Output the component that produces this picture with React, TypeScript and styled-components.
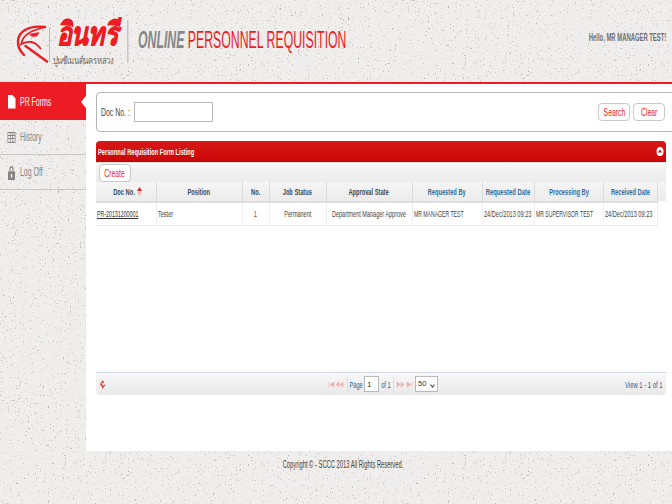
import React from 'react';
import styled, { createGlobalStyle } from 'styled-components';

const noise = `data:image/svg+xml,${encodeURIComponent(
    `<svg xmlns='http://www.w3.org/2000/svg' width='400' height='400'><filter id='n' x='0' y='0' width='100%' height='100%'><feTurbulence type='fractalNoise' baseFrequency='0.6' numOctaves='3' seed='7'/><feColorMatrix values='0 0 0 0 0.45 0 0 0 0 0.44 0 0 0 0 0.42 3.5 3.5 0 0 -4.22'/></filter><rect width='400' height='400' fill='#efeeec'/><rect width='400' height='400' filter='url(#n)'/></svg>`,
)}`;

const GlobalStyle = createGlobalStyle`
    html, body {
        margin: 0;
        padding: 0;
        overflow: hidden;
    }
    body {
        font-family: "Liberation Sans", Arial, sans-serif;
        background: #efeeec url("${noise}");
    }
`;

const Page = styled.div`
    width: 672px;
    height: 504px;
    display: flex;
    flex-direction: column;
`;

const Header = styled.header`
    height: 82px;
    flex: none;
    display: flex;
    align-items: flex-start;
    justify-content: space-between;
    border-bottom: 2px solid #ed1c24;
`;

const Brand = styled.div`
    display: flex;
    flex: none;
    align-items: flex-start;
    padding: 15px 0 0 15px;
`;

const EagleMark = styled.svg`
    width: 34px;
    height: 44px;
    flex: none;
    margin-top: 7px;
`;

const LogoRule = styled.div`
    width: 1px;
    height: 35px;
    flex: none;
    margin-top: 12px;
    background: #bdbbb8;
`;

const LogoText = styled.div`
    width: 74px;
    flex: none;
    margin-left: 3px;
`;

const ThaiName = styled.div`
    height: 39px;
    padding-left: 5px;
    font-family: "Noto Sans", "DejaVu Sans", sans-serif;
    font-size: 32px;
    line-height: 36px;
    font-weight: 900;
    font-style: italic;
    color: #ed1c24;
    -webkit-text-stroke: 0.8px #ed1c24;
    white-space: nowrap;
    transform: scaleX(0.77);
    transform-origin: left center;
`;

const ThaiSlogan = styled.div`
    font-family: "Noto Sans", "DejaVu Sans", sans-serif;
    font-size: 10px;
    line-height: 13px;
    letter-spacing: -0.5px;
    color: #6b6b6b;
    white-space: nowrap;
    transform: scaleX(0.77);
    transform-origin: left center;
`;

const BrandDivider = styled.div`
    width: 2px;
    height: 43px;
    flex: none;
    margin: 5px 9px 0 0;
    background: linear-gradient(to right, #bdbbb8, #e4e2e0);
`;

const Title = styled.h1`
    width: 210px;
    flex: none;
    margin: 12px 0 0;
    font-size: 24px;
    line-height: 26px;
    font-weight: 400;
    white-space: nowrap;
    color: #ed1c24;
    transform: scaleX(0.512);
    transform-origin: left center;
`;

const TitleStrong = styled.span`
    color: #85878a;
    font-weight: 700;
    font-style: italic;
`;

const Greeting = styled.div`
    margin: 31px 6px 0 0;
    font-size: 10.5px;
    line-height: 13px;
    font-weight: 700;
    color: #6d7075;
    white-space: nowrap;
    transform: scaleX(0.56);
    transform-origin: right center;
`;

const Body = styled.div`
    height: 367px;
    flex: none;
    display: flex;
`;

const Sidebar = styled.nav`
    width: 86px;
    flex: none;
    display: flex;
    flex-direction: column;
`;

const NavItem = styled.div<{ $active?: boolean }>`
    position: relative;
    height: ${props => (props.$active ? '35px' : '34px')};
    display: flex;
    align-items: center;
    gap: 4px;
    padding-left: 7px;
    font-size: 12px;
    background: ${props => (props.$active ? '#ed1c24' : 'transparent')};
    color: ${props => (props.$active ? '#ffffff' : '#858585')};
    border-bottom: 1px solid ${props => (props.$active ? '#ed1c24' : '#c9c8c6')};

    ${props =>
        props.$active &&
        `&::after {
            content: '';
            position: absolute;
            right: 0;
            top: 12px;
            border-style: solid;
            border-width: 6px 5px 6px 0;
            border-color: transparent #ffffff transparent transparent;
        }`}
`;

const NavIcon = styled.svg`
    width: 9px;
    height: 15px;
    flex: none;
    fill: currentColor;
`;

const NavLabel = styled.span`
    display: inline-block;
    white-space: nowrap;
    transform: scaleX(0.58);
    transform-origin: left center;
`;

const Main = styled.main`
    flex: 1;
    min-width: 0;
    background: #ffffff;
    padding: 8px 0 0 10px;
    display: flex;
    flex-direction: column;
    gap: 9px;
`;

const SearchPanel = styled.section`
    height: 38px;
    flex: none;
    margin-right: -6px;
    padding-right: 12px;
    display: flex;
    align-items: center;
    justify-content: space-between;
    border: 1px solid #b5b5b5;
    border-radius: 4px;
`;

const SearchField = styled.div`
    display: flex;
    align-items: center;
    padding-left: 4px;
`;

const FieldLabel = styled.label`
    width: 33px;
    font-size: 10.5px;
    color: #444444;
    white-space: nowrap;
    display: inline-block;
    transform: scaleX(0.66);
    transform-origin: left center;
`;

const FieldInput = styled.div`
    width: 77px;
    height: 18px;
    border: 1px solid #b7b7b7;
    background: #ffffff;
`;

const Actions = styled.div`
    display: flex;
    gap: 3px;
`;

const RedButton = styled.button<{ $width: number }>`
    width: ${props => props.$width}px;
    height: 18px;
    padding: 0;
    display: flex;
    align-items: center;
    justify-content: center;
    border: 1px solid #c9c9c9;
    border-radius: 4px;
    background: #ffffff;
    color: #ed1c24;
    font-family: inherit;
    font-size: 11px;
    font-weight: 400;
`;

const ButtonLabel = styled.span`
    flex: none;
    transform: scaleX(0.62);
`;

const Grid = styled.section`
    width: 570px;
    flex: none;
`;

const GridTitle = styled.div`
    height: 21px;
    display: flex;
    align-items: center;
    justify-content: space-between;
    padding: 0 2px;
    background: linear-gradient(#d81818, #c90606);
    border-radius: 4px 4px 0 0;
    color: #ffffff;
    font-size: 9.5px;
    font-weight: 700;
`;

const GridTitleText = styled.span`
    display: inline-block;
    white-space: nowrap;
    transform: scaleX(0.6);
    transform-origin: left center;
`;

const CollapseIcon = styled.svg`
    width: 8px;
    height: 9px;
    flex: none;
`;

const Toolbar = styled.div`
    height: 20px;
    display: flex;
    align-items: center;
    padding-left: 3px;
    background: linear-gradient(#f6f6f6, #ececec);
    border-top: 1px solid #dddddd;
    box-sizing: border-box;
`;

const TableArea = styled.div`
    height: 190px;
    background: linear-gradient(#f5f5f5, #ebebeb) top / 100% 19px no-repeat, #ffffff;
`;

const Table = styled.table`
    width: 561px;
    table-layout: fixed;
    border-collapse: collapse;
`;

const TableHead = styled.thead`
    background: linear-gradient(#f5f5f5, #ebebeb);
`;

const HeadCell = styled.th<{ $blue?: boolean; $sort?: boolean }>`
    height: 19px;
    padding: 0 0 0 ${props => (props.$sort ? '3px' : '0')};
    font-size: 9.5px;
    font-weight: 700;
    text-align: center;
    color: ${props => (props.$blue ? '#2e6da4' : '#34495e')};
    border-right: 1px solid #dcdcdc;
    border-bottom: 2px solid #dedede;
    white-space: nowrap;
`;

const Squeeze = styled.span<{ $scale?: number }>`
    display: inline-block;
    margin: 0 -40px;
    white-space: nowrap;
    transform: scaleX(${props => props.$scale ?? 0.6});
`;

const SortLabel = styled(Squeeze)`
    margin: 0 -7px;
`;

const Cell = styled.td<{ $align?: string; $color?: string }>`
    height: 22px;
    padding: 0 1px;
    font-size: 8.5px;
    text-align: ${props => props.$align ?? 'center'};
    color: ${props => props.$color ?? '#444444'};
    border-right: 1px solid #eeeeee;
    border-bottom: 1px solid #e8e8e8;
    white-space: nowrap;
`;

const LeftSqueeze = styled(Squeeze)`
    margin: 0 -100px 0 0;
    transform-origin: left center;
`;

const DocLink = styled(LeftSqueeze)`
    text-decoration: underline;
    color: #333333;
`;

const SortArrows = styled.svg`
    width: 5px;
    height: 9px;
    margin-left: 2px;
    vertical-align: -1px;
`;

const Pager = styled.div`
    height: 23px;
    display: grid;
    grid-template-columns: 1fr auto 1fr;
    align-items: center;
    padding: 0 3px 0 4px;
    background: linear-gradient(#f7f7f7, #e9e9e9);
    border-top: 1px solid #d5dce3;
    border-radius: 0 0 4px 4px;
    box-sizing: border-box;
    font-size: 9.5px;
    color: #1f5f9e;
`;

const RefreshIcon = styled.svg`
    width: 6px;
    height: 9px;
`;

const PagerCenter = styled.div`
    display: flex;
    align-items: center;
    margin-left: 3px;
`;

const PagerNav = styled.svg`
    width: 17px;
    height: 7px;
    flex: none;
`;

const PagerSep = styled.div`
    width: 1px;
    height: 15px;
    flex: none;
    margin: 0 2px;
    background: #dddddd;
`;

const PagerText = styled.div<{ $width: number }>`
    width: ${props => props.$width}px;
    flex: none;
    display: flex;
    justify-content: center;
`;

const PagerWord = styled.span`
    flex: none;
    white-space: nowrap;
    transform: scaleX(0.6);
`;

const PageInput = styled.div`
    width: 11px;
    height: 14px;
    flex: none;
    margin: 0 2px 0 1px;
    padding-left: 2px;
    border: 1px solid #b9b9b9;
    background: #ffffff;
    color: #333333;
    font-size: 8px;
    line-height: 15px;
`;

const PageSize = styled.div`
    width: 19px;
    height: 14px;
    flex: none;
    margin-left: 2px;
    display: flex;
    justify-content: space-between;
    padding-left: 2px;
    border: 1px solid #b9b9b9;
    background: #ffffff;
    color: #333333;
    font-size: 7.5px;
    line-height: 13px;
`;

const SelectCaret = styled.svg`
    width: 5px;
    height: 4px;
    margin: 7px 2px 0 0;
`;

const ViewText = styled.div`
    display: flex;
    justify-content: flex-end;
`;

const ViewLabel = styled.span`
    flex: none;
    white-space: nowrap;
    transform: scaleX(0.62);
    transform-origin: right center;
`;

const Footer = styled.footer`
    flex: 1;
    display: flex;
    justify-content: center;
    padding: 8px 0 0 14px;
    font-size: 10px;
    color: #444444;
`;

const FooterText = styled.span`
    display: inline-block;
    line-height: 12px;
    white-space: nowrap;
    transform: scaleX(0.58);
`;

const Eagle: React.FunctionComponent = () => (
    <EagleMark viewBox="0 0 34 44" fill="none" stroke="#ed1c24" strokeLinecap="round" strokeLinejoin="round">
        <path d="M30 5 C22 4 15 5 10 8 C5 11 3 15 3 19 C2.5 25 5 29 9 33" strokeWidth="2.4" />
        <path d="M30 5 C24 7 18 8 14 11 C9 14 7 18 6.5 21" strokeWidth="1.6" />
        <path d="M5.5 22.5 C9 20 13 19.5 17 20 C20 21 23 23 25.5 26.5" strokeWidth="1.8" />
        <path d="M10.5 24 L32 39.5" strokeWidth="2.4" />
        <path d="M15 12 L24 10.5 L22 14 L17 14.5 Z" fill="#ed1c24" strokeWidth="0.6" />
    </EagleMark>
);

const columns = [
    { label: 'Doc No.', width: 60, sort: true },
    { label: 'Position', width: 86 },
    { label: 'No.', width: 27 },
    { label: 'Job Status', width: 57 },
    { label: 'Approval State', width: 86 },
    { label: 'Requested By', width: 70, blue: true },
    { label: 'Requested Date', width: 52, blue: true, scale: 0.62 },
    { label: 'Processing By', width: 69, blue: true },
    { label: 'Received Date', width: 54, blue: true },
];

const App: React.FunctionComponent = () => (
    <Page>
        <GlobalStyle />
        <Header>
            <Brand>
                <Eagle />
                <LogoRule />
                <LogoText>
                    <ThaiName>อินทรี</ThaiName>
                    <ThaiSlogan>ปูนซีเมนต์นครหลวง</ThaiSlogan>
                </LogoText>
                <BrandDivider />
                <Title>
                    <TitleStrong>ONLINE</TitleStrong> PERSONNEL REQUISITION
                </Title>
            </Brand>
            <Greeting>Hello, MR MANAGER TEST!</Greeting>
        </Header>
        <Body>
            <Sidebar>
                <NavItem $active>
                    <NavIcon viewBox="0 0 9 15">
                        <path d="M1 1 H5.5 L8.5 4.5 V14.5 H1 Z" />
                    </NavIcon>
                    <NavLabel>PR Forms</NavLabel>
                </NavItem>
                <NavItem>
                    <NavIcon viewBox="0 0 9 15">
                        <path d="M0.5 2 H8.5 V13 H0.5 Z M1.2 3 V5 H2.9 V3 Z M3.6 3 V5 H5.4 V3 Z M6.1 3 V5 H7.8 V3 Z M1.2 6 V8 H2.9 V6 Z M3.6 6 V8 H5.4 V6 Z M6.1 6 V8 H7.8 V6 Z M1.2 9 V12 H2.9 V9 Z M3.6 9 V12 H5.4 V9 Z M6.1 9 V12 H7.8 V9 Z" fillRule="evenodd" />
                    </NavIcon>
                    <NavLabel>History</NavLabel>
                </NavItem>
                <NavItem>
                    <NavIcon viewBox="0 0 9 15">
                        <path d="M2.5 6.5 V3.5 C2.5 0.3 6.5 0.3 6.5 3.5 V6.5 H8 V15 H1 V6.5 Z M3.6 6.5 H5.4 V3.5 C5.4 2 3.6 2 3.6 3.5 Z M3.8 9 V12.5 H5.2 V9 Z" fillRule="evenodd" />
                    </NavIcon>
                    <NavLabel>Log Off</NavLabel>
                </NavItem>
            </Sidebar>
            <Main>
                <SearchPanel>
                    <SearchField>
                        <FieldLabel>Doc No. :</FieldLabel>
                        <FieldInput />
                    </SearchField>
                    <Actions>
                        <RedButton $width={32}>
                            <ButtonLabel>Search</ButtonLabel>
                        </RedButton>
                        <RedButton $width={32}>
                            <ButtonLabel>Clear</ButtonLabel>
                        </RedButton>
                    </Actions>
                </SearchPanel>
                <Grid>
                    <GridTitle>
                        <GridTitleText>Personnal Requisition Form Listing</GridTitleText>
                        <CollapseIcon viewBox="0 0 8 9">
                            <ellipse cx="4" cy="4.5" rx="3.5" ry="4.5" fill="#ffffff" />
                            <path d="M2 5.5 L4 2.5 L6 5.5 Z" fill="#c90606" />
                        </CollapseIcon>
                    </GridTitle>
                    <Toolbar>
                        <RedButton $width={32}>
                            <ButtonLabel>Create</ButtonLabel>
                        </RedButton>
                    </Toolbar>
                    <TableArea>
                        <Table>
                            <colgroup>
                                {columns.map(column => (
                                    <col key={column.label} width={column.width} />
                                ))}
                            </colgroup>
                            <TableHead>
                                <tr>
                                    {columns.map(column =>
                                        column.sort ? (
                                            <HeadCell key={column.label} $sort>
                                                <SortLabel>{column.label}</SortLabel>
                                                <SortArrows viewBox="0 0 5 9">
                                                    <path d="M0 4 L2.5 0 L5 4 Z" fill="#ed1c24" />
                                                    <path d="M0 5 L2.5 9 L5 5 Z" fill="#e8b4b4" />
                                                </SortArrows>
                                            </HeadCell>
                                        ) : (
                                            <HeadCell key={column.label} $blue={column.blue}>
                                                <Squeeze $scale={column.scale}>{column.label}</Squeeze>
                                            </HeadCell>
                                        ),
                                    )}
                                </tr>
                            </TableHead>
                            <tbody>
                                <tr>
                                    <Cell $align="left">
                                        <DocLink $scale={0.62}>PR-20131200001</DocLink>
                                    </Cell>
                                    <Cell $align="left">
                                        <LeftSqueeze $scale={0.65}>Tester</LeftSqueeze>
                                    </Cell>
                                    <Cell $color="#b5473c">
                                        <Squeeze $scale={0.7}>1</Squeeze>
                                    </Cell>
                                    <Cell>
                                        <Squeeze $scale={0.65}>Permanent</Squeeze>
                                    </Cell>
                                    <Cell>
                                        <Squeeze $scale={0.65}>Department Manager Approve</Squeeze>
                                    </Cell>
                                    <Cell $align="left">
                                        <LeftSqueeze>MR MANAGER TEST</LeftSqueeze>
                                    </Cell>
                                    <Cell $align="left">
                                        <LeftSqueeze $scale={0.66}>24/Dec/2013 09:23</LeftSqueeze>
                                    </Cell>
                                    <Cell $align="left">
                                        <LeftSqueeze>MR SUPERVISOR TEST</LeftSqueeze>
                                    </Cell>
                                    <Cell $align="left">
                                        <LeftSqueeze $scale={0.66}>24/Dec/2013 09:23</LeftSqueeze>
                                    </Cell>
                                </tr>
                            </tbody>
                        </Table>
                    </TableArea>
                    <Pager>
                        <RefreshIcon viewBox="0 0 7 10">
                            <path d="M3.5 2 A2.6 2.6 0 1 0 6 5 M3.5 8 A2.6 2.6 0 0 0 1 5" fill="none" stroke="#ed1c24" strokeWidth="1.1" />
                            <path d="M2.5 0 L5 2 L2.5 3.5 Z M2.5 7 L4.5 8.2 L2.5 10 Z" fill="#ed1c24" />
                        </RefreshIcon>
                        <PagerCenter>
                            <PagerNav viewBox="0 0 17 7">
                                <path d="M1 1 V6 M6 1 L2 3.5 L6 6 Z M11 1 L8 3.5 L11 6 Z M15 1 L12 3.5 L15 6 Z" fill="#f0b0b0" stroke="#f0b0b0" strokeWidth="0.6" />
                            </PagerNav>
                            <PagerSep />
                            <PagerText $width={13}>
                                <PagerWord>Page</PagerWord>
                            </PagerText>
                            <PageInput>1</PageInput>
                            <PagerText $width={10}>
                                <PagerWord>of 1</PagerWord>
                            </PagerText>
                            <PagerSep />
                            <PagerNav viewBox="0 0 17 7">
                                <path d="M1 1 L4 3.5 L1 6 Z M5 1 L8 3.5 L5 6 Z M11 1 L15 3.5 L11 6 Z M16 1 V6" fill="#f0b0b0" stroke="#f0b0b0" strokeWidth="0.6" />
                            </PagerNav>
                            <PageSize>
                                50
                                <SelectCaret viewBox="0 0 5 4">
                                    <path d="M0.5 0.5 L2.5 3 L4.5 0.5" fill="none" stroke="#444444" strokeWidth="1.1" />
                                </SelectCaret>
                            </PageSize>
                        </PagerCenter>
                        <ViewText>
                            <ViewLabel>View 1 - 1 of 1</ViewLabel>
                        </ViewText>
                    </Pager>
                </Grid>
            </Main>
        </Body>
        <Footer>
            <FooterText>Copyright © - SCCC 2013 All Rights Reserved.</FooterText>
        </Footer>
    </Page>
);

export default App;
